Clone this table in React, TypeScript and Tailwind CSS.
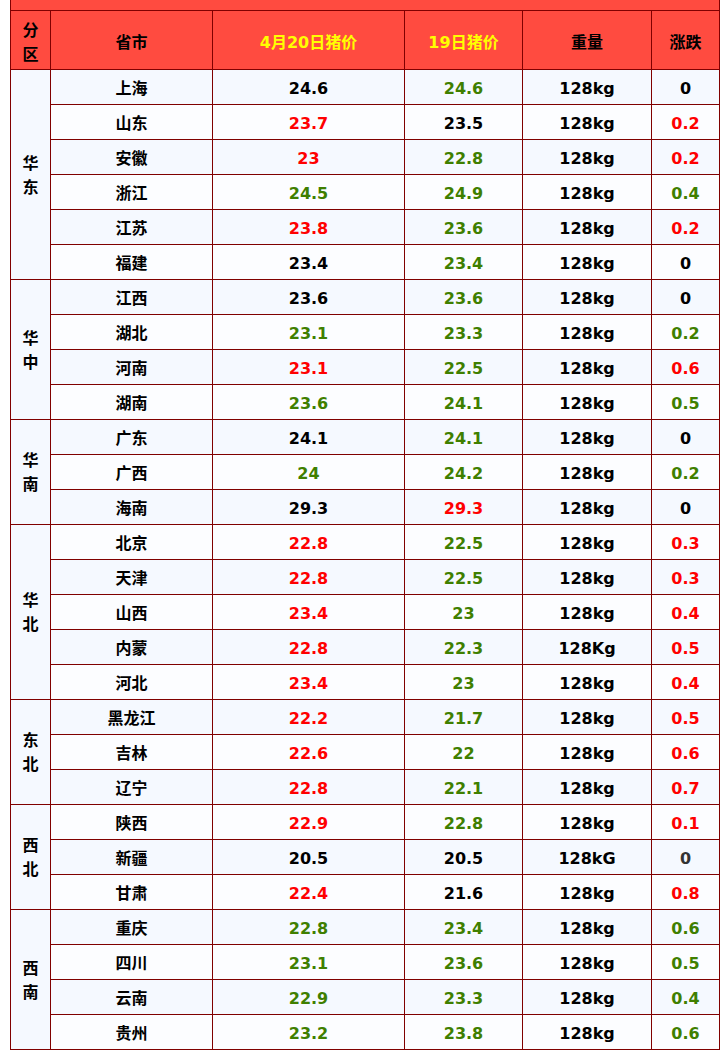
type Tone = 'k' | 'r' | 'g' | 'd'

interface Row {
  city: string
  today: string
  todayTone: Tone
  prev: string
  prevTone: Tone
  weight: string
  diff: string
  diffTone: Tone
}

interface Region {
  name: string
  rows: Row[]
}

const r = (
  city: string,
  today: string,
  todayTone: Tone,
  prev: string,
  prevTone: Tone,
  diff: string,
  diffTone: Tone,
  weight = '128kg'
): Row => ({ city, today, todayTone, prev, prevTone, weight, diff, diffTone })

const regions: Region[] = [
  {
    name: '华东',
    rows: [
      r('上海', '24.6', 'k', '24.6', 'g', '0', 'k'),
      r('山东', '23.7', 'r', '23.5', 'k', '0.2', 'r'),
      r('安徽', '23', 'r', '22.8', 'g', '0.2', 'r'),
      r('浙江', '24.5', 'g', '24.9', 'g', '0.4', 'g'),
      r('江苏', '23.8', 'r', '23.6', 'g', '0.2', 'r'),
      r('福建', '23.4', 'k', '23.4', 'g', '0', 'k'),
    ],
  },
  {
    name: '华中',
    rows: [
      r('江西', '23.6', 'k', '23.6', 'g', '0', 'k'),
      r('湖北', '23.1', 'g', '23.3', 'g', '0.2', 'g'),
      r('河南', '23.1', 'r', '22.5', 'g', '0.6', 'r'),
      r('湖南', '23.6', 'g', '24.1', 'g', '0.5', 'g'),
    ],
  },
  {
    name: '华南',
    rows: [
      r('广东', '24.1', 'k', '24.1', 'g', '0', 'k'),
      r('广西', '24', 'g', '24.2', 'g', '0.2', 'g'),
      r('海南', '29.3', 'k', '29.3', 'r', '0', 'k'),
    ],
  },
  {
    name: '华北',
    rows: [
      r('北京', '22.8', 'r', '22.5', 'g', '0.3', 'r'),
      r('天津', '22.8', 'r', '22.5', 'g', '0.3', 'r'),
      r('山西', '23.4', 'r', '23', 'g', '0.4', 'r'),
      r('内蒙', '22.8', 'r', '22.3', 'g', '0.5', 'r', '128Kg'),
      r('河北', '23.4', 'r', '23', 'g', '0.4', 'r'),
    ],
  },
  {
    name: '东北',
    rows: [
      r('黑龙江', '22.2', 'r', '21.7', 'g', '0.5', 'r'),
      r('吉林', '22.6', 'r', '22', 'g', '0.6', 'r'),
      r('辽宁', '22.8', 'r', '22.1', 'g', '0.7', 'r'),
    ],
  },
  {
    name: '西北',
    rows: [
      r('陕西', '22.9', 'r', '22.8', 'g', '0.1', 'r'),
      r('新疆', '20.5', 'k', '20.5', 'k', '0', 'd', '128kG'),
      r('甘肃', '22.4', 'r', '21.6', 'k', '0.8', 'r'),
    ],
  },
  {
    name: '西南',
    rows: [
      r('重庆', '22.8', 'g', '23.4', 'g', '0.6', 'g'),
      r('四川', '23.1', 'g', '23.6', 'g', '0.5', 'g'),
      r('云南', '22.9', 'g', '23.3', 'g', '0.4', 'g'),
      r('贵州', '23.2', 'g', '23.8', 'g', '0.6', 'g'),
    ],
  },
]

const toneClass: Record<Tone, string> = {
  k: 'text-black',
  r: 'text-[#ff0000]',
  g: 'text-[#3f7f00]',
  d: 'text-[#333333]',
}

const spanClass: Record<number, string> = {
  3: 'row-span-3',
  4: 'row-span-4',
  5: 'row-span-5',
  6: 'row-span-6',
}

export default function App() {
  let index = 0

  return (
    <div className="min-h-screen bg-white font-['DejaVu_Sans','Noto_Sans_CJK_SC',sans-serif] text-[16px] font-bold">
      <div className="ml-[10px] grid w-[710px] grid-cols-[39px_161px_191px_117px_128px_67px] gap-px bg-[#800000] px-px pb-px">
        {/* title row, cut off at the top of the shot */}
        <div className="col-span-6 flex h-[10px] justify-center overflow-hidden bg-[#ff4b40]">
          <span className="-mt-[19px] leading-6 text-black">生猪价格（元/公斤）</span>
        </div>

        {/* header */}
        <div className="flex h-[58px] flex-col items-center justify-center bg-[#ff4b40] pt-[6px] leading-6 text-black">
          <span>分</span>
          <span>区</span>
        </div>
        <div className="flex items-center justify-center bg-[#ff4b40] pt-[6px] text-black">省市</div>
        <div className="flex items-center justify-center bg-[#ff4b40] pt-[6px] text-[#ffff00]">4月20日猪价</div>
        <div className="flex items-center justify-center bg-[#ff4b40] pt-[6px] text-[#ffff00]">19日猪价</div>
        <div className="flex items-center justify-center bg-[#ff4b40] pt-[6px] text-black">重量</div>
        <div className="flex items-center justify-center bg-[#ff4b40] pt-[6px] text-black">涨跌</div>

        {regions.map((region) => (
          <RegionBlock key={region.name} region={region} start={(index += region.rows.length) - region.rows.length} />
        ))}
      </div>
    </div>
  )
}

function RegionBlock({ region, start }: { region: Region; start: number }) {
  return (
    <>
      <div
        className={`${spanClass[region.rows.length]} flex flex-col items-center justify-center bg-[#f5f9ff] pt-[2px] leading-6 text-black`}
      >
        {region.name.split('').map((ch) => (
          <span key={ch}>{ch}</span>
        ))}
      </div>
      {region.rows.map((row, i) => {
        const bg = (start + i) % 2 === 0 ? 'bg-[#f5f9ff]' : 'bg-[#fcfdff]'
        return (
          <div key={row.city} className="contents">
            <div className={`flex h-[34px] items-center justify-center pt-[3px] ${bg} text-black`}>{row.city}</div>
            <div className={`flex items-center justify-center pt-[3px] ${bg} ${toneClass[row.todayTone]}`}>{row.today}</div>
            <div className={`flex items-center justify-center pt-[3px] ${bg} ${toneClass[row.prevTone]}`}>{row.prev}</div>
            <div className={`flex items-center justify-center pt-[3px] ${bg} text-black`}>{row.weight}</div>
            <div className={`flex items-center justify-center pt-[3px] ${bg} ${toneClass[row.diffTone]}`}>{row.diff}</div>
          </div>
        )
      })}
    </>
  )
}
